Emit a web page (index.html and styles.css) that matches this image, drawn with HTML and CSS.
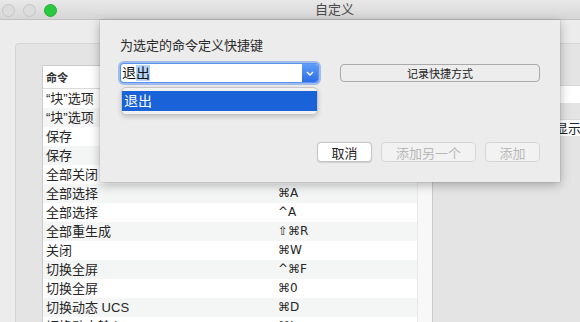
FILE: index.html
```html
<!DOCTYPE html>
<html>
<head>
  <meta charset="UTF-8">
  <title>自定义</title>
  <link rel="stylesheet" href="styles.css">
</head>
<body>
  <div class="window">
    <div class="titlebar">
      <div class="lights">
        <span class="light"></span>
        <span class="light"></span>
        <span class="light green"></span>
      </div>
      <div class="title">自定义</div>
    </div>

    <div class="content">
      <div class="group">
        <div class="scroller">
          <table class="commands">
            <thead>
              <tr><th class="col-name">命令</th><th class="col-key"></th></tr>
            </thead>
            <tbody>
              <tr><td>“块”选项</td><td class="key">⌥⌘B</td></tr>
              <tr><td>“块”选项</td><td class="key">^⌘B</td></tr>
              <tr><td>保存</td><td class="key">⌘S</td></tr>
              <tr><td>保存</td><td class="key">^S</td></tr>
              <tr><td>全部关闭</td><td class="key">⌥⌘W</td></tr>
              <tr><td>全部选择</td><td class="key">⌘A</td></tr>
              <tr><td>全部选择</td><td class="key">^A</td></tr>
              <tr><td>全部重生成</td><td class="key">⇧⌘R</td></tr>
              <tr><td>关闭</td><td class="key">⌘W</td></tr>
              <tr><td>切换全屏</td><td class="key">^⌘F</td></tr>
              <tr><td>切换全屏</td><td class="key">⌘0</td></tr>
              <tr><td>切换动态 UCS</td><td class="key">⌘D</td></tr>
              <tr><td>切换动态输入</td><td class="key">⌘I</td></tr>
            </tbody>
          </table>
          <div class="vbar"></div>
        </div>
        <div class="side">
          <div class="field"></div>
          <div class="field hint">显示</div>
        </div>
      </div>
    </div>

    <!-- sheet dropped over the window -->
    <div class="sheet">
      <div class="sheet-label">为选定的命令定义快捷键</div>
      <div class="sheet-row">
        <div class="combo">
          <div class="combo-text">退<span class="sel">出</span></div>
          <div class="combo-btn">
            <svg width="8" height="5" viewBox="0 0 8 5"><path d="M1 1 L4 4 L7 1" fill="none" stroke="#fff" stroke-width="1.4"/></svg>
          </div>
        </div>
        <button type="button" class="btn btn-record">记录快捷方式</button>
      </div>
      <div class="dropdown">
        <div class="dropdown-item">退出</div>
      </div>
      <div class="sheet-footer">
        <button type="button" class="btn btn-push">取消</button>
        <button type="button" class="btn btn-push btn-wide" disabled>添加另一个</button>
        <button type="button" class="btn btn-push" disabled>添加</button>
      </div>
    </div>
  </div>
</body>
</html>
```

FILE: styles.css
```css
html, body {
  margin: 0;
  padding: 0;
}

body {
  font-family: "Liberation Sans", "Noto Sans CJK SC", "DejaVu Sans", sans-serif;
  font-size: 13px;
  color: #262626;
  background-color: #ececec;
}

.window {
  position: relative;
  width: 580px;
  height: 322px;
  overflow: hidden;
  background-color: #ececec;
  display: flex;
  flex-direction: column;
}

/* title bar */
.titlebar {
  height: 19px;
  flex: none;
  display: flex;
  align-items: center;
  background: linear-gradient(#e8e8e8, #d6d6d6);
  border-bottom: 1px solid #c2c2c2;
}

.lights {
  display: flex;
  gap: 8px;
  padding-left: 2px;
  margin-top: 1px;
}

.light {
  width: 11px;
  height: 11px;
  border-radius: 50%;
  background-color: #dcdcdc;
  border: 0.5px solid #c6c6c6;
}

.light.green {
  background-color: #2ac940;
  border-color: #22b236;
}

.title {
  margin-left: 258px;
  font-size: 13px;
  color: #4a4a4a;
  line-height: 19px;
}

/* background window content */
.content {
  flex: 1;
  padding: 23px 0 0 15px;
  display: flex;
  min-height: 0;
}

.group {
  flex: 1;
  display: flex;
  background-color: #e4e4e4;
  border: 1px solid #d5d5d5;
  border-right: none;
  border-bottom: none;
  border-top-left-radius: 4px;
  padding: 21px 0 0 26px;
  min-height: 0;
}

.scroller {
  flex: none;
  display: flex;
  align-self: flex-start;
  border: 1px solid #cbcbcb;
  background-color: #fff;
}

.commands {
  width: 374px;
  border-collapse: collapse;
  table-layout: fixed;
}

.commands th {
  height: 22px;
  padding: 0 0 0 3px;
  text-align: left;
  font-size: 11px;
  font-weight: 600;
  color: #333;
  background-color: #fff;
  border-bottom: 1px solid #dadada;
}

.commands .col-name {
  width: 229px;
}

.commands td {
  height: 19px;
  padding: 0 0 0 3px;
  line-height: 19px;
  white-space: nowrap;
  overflow: hidden;
  color: #262626;
}

.commands tbody tr:nth-child(even) {
  background-color: #f4f5f5;
}

.commands .key {
  font-family: "DejaVu Sans", "Liberation Sans", sans-serif;
  font-size: 12px;
}

.vbar {
  width: 14px;
  background-color: #f8f8f8;
  border-left: 1px solid #e8e8e8;
}

.side {
  display: flex;
  flex-direction: column;
  padding: 20px 0 0 37px;
}

.field {
  width: 140px;
  height: 17px;
  background-color: #fff;
  border-top: 1px solid #d8d8d8;
}

.field.hint {
  margin-top: 16px;
  padding-left: 85px;
  box-sizing: border-box;
  line-height: 17px;
  color: #222;
}

/* the sheet */
.sheet {
  position: absolute;
  left: 100px;
  top: 20px;
  width: 460px;
  height: 162px;
  box-sizing: border-box;
  padding: 18px 20px 20px 20px;
  background-color: #ececec;
  box-shadow: 0 3px 10px rgba(0, 0, 0, 0.28), 0 0 1px rgba(0, 0, 0, 0.35);
  display: flex;
  flex-direction: column;
}

.sheet-label {
  line-height: 16px;
  font-size: 13px;
  color: #2a2a2a;
  margin-bottom: 10px;
}

.sheet-row {
  display: flex;
  align-items: flex-start;
}

.combo {
  margin-left: 1px;
  width: 197px;
  height: 18px;
  display: flex;
  border-radius: 3px;
  background-color: #fff;
  box-shadow: 0 0 0 1px #5d93ef, 0 0 0 3px rgba(96, 148, 240, 0.55);
}

.combo-text {
  flex: 1;
  padding-left: 1px;
  font-size: 14px;
  line-height: 18px;
  color: #111;
}

.combo-text .sel {
  background-color: #b3d4fd;
}

.combo-btn {
  width: 16px;
  display: flex;
  align-items: center;
  justify-content: center;
  border-radius: 0 3px 3px 0;
  background: linear-gradient(#5f9ff8, #2c6de8);
}

.btn {
  font-family: inherit;
  padding: 0;
  margin: 0;
  border-radius: 4px;
  cursor: pointer;
}

.btn-record {
  margin-left: 22px;
  width: 200px;
  height: 18px;
  font-size: 11px;
  color: #222;
  background-color: #ededed;
  border: 1px solid #a9a9a9;
}

.dropdown {
  position: absolute;
  left: 21px;
  top: 67px;
  width: 197px;
  height: 28px;
  box-sizing: border-box;
  padding-top: 3px;
  background-color: #f2f2f2;
  border: 1px solid #c6c6c6;
  border-radius: 5px;
  box-shadow: 0 2px 5px rgba(0, 0, 0, 0.18);
}

.dropdown-item {
  height: 20px;
  line-height: 20px;
  padding-left: 2px;
  font-size: 14px;
  color: #fff;
  background-color: #1a62d7;
}

.sheet-footer {
  margin-top: auto;
  display: flex;
  justify-content: flex-end;
  gap: 9px;
}

.btn-push {
  width: 55px;
  height: 20px;
  font-size: 13px;
  color: #1e1e1e;
  background-color: #fff;
  border: 1px solid #c4c4c4;
  box-shadow: 0 0.5px 1px rgba(0, 0, 0, 0.12);
}

.btn-push.btn-wide {
  width: 95px;
}

.btn-push:disabled {
  color: #b8b8b8;
  background-color: #f2f2f2;
  border-color: #d6d6d6;
  box-shadow: none;
  cursor: default;
}
```
